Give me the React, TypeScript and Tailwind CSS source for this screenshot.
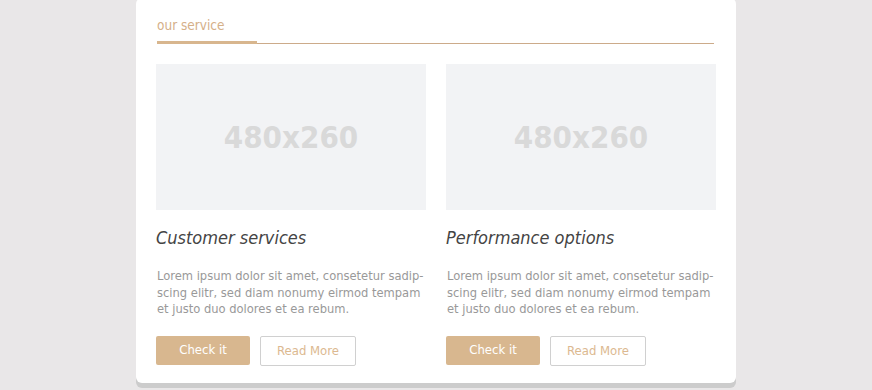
import React from "react";

type Service = {
  title: string;
  lines: string[];
};

const lorem = [
  "Lorem ipsum dolor sit amet, consetetur sadip-",
  "scing elitr, sed diam nonumy eirmod tempam",
  "et justo duo dolores et ea rebum.",
];

const services: Service[] = [
  { title: "Customer services", lines: lorem },
  { title: "Performance options", lines: lorem },
];

const ServiceCard: React.FC<{ item: Service }> = ({ item }) => {
  return (
    <div className="flex flex-col">
      {/* placeholder image */}
      <div className="h-[146px] bg-[#f2f3f5] flex items-center justify-center">
        <span className="text-[31px] font-semibold text-[#d9d9d9]">480x260</span>
      </div>
      <h3 className="mt-[16px] text-[18px] italic text-[#444] leading-[24px]">{item.title}</h3>
      <p className="mt-[18px] px-px text-[12.8px] leading-[16.5px] text-[#999] whitespace-nowrap">
        {item.lines.map((l, i) => (
          <span key={i} className="block">
            {l}
          </span>
        ))}
      </p>
      <div className="mt-[18px] flex flex-row gap-[10px]">
        <button className="w-[94px] h-[29px] bg-[#d8b78f] text-white text-[13px] rounded-[2px]">
          Check it
        </button>
        <button className="w-[96px] h-[30px] border border-[#d0d0d0] text-[#dcb991] text-[13px] rounded-[2px] bg-white">
          Read More
        </button>
      </div>
    </div>
  );
};

export default function App() {
  return (
    <div
      className="w-[872px] h-[390px] bg-[#e9e7e8] overflow-hidden"
      style={{ fontFamily: "'DejaVu Sans Condensed', 'DejaVu Sans', sans-serif" }}
    >
      <div className="ml-[136px] w-[600px] h-[385px] -mt-[2px] bg-white rounded-[6px] shadow-[0_5px_0_#cccccc] px-5">
        {/* header */}
        <div className="pt-[19px] ml-px mr-[2px]">
          <div className="text-[13.5px] text-[#d5b089] leading-[16px]">our service</div>
          <div className="mt-[8px] flex flex-row items-end">
            <div className="w-[100px] h-[3px] bg-[#d8b68e]"></div>
            <div className="flex-1 h-px bg-[#ccab8a]"></div>
          </div>
        </div>
        {/* cards */}
        <div className="mt-[20px] grid grid-cols-2 gap-5">
          {services.map((s, i) => (
            <ServiceCard key={i} item={s} />
          ))}
        </div>
      </div>
    </div>
  );
}
